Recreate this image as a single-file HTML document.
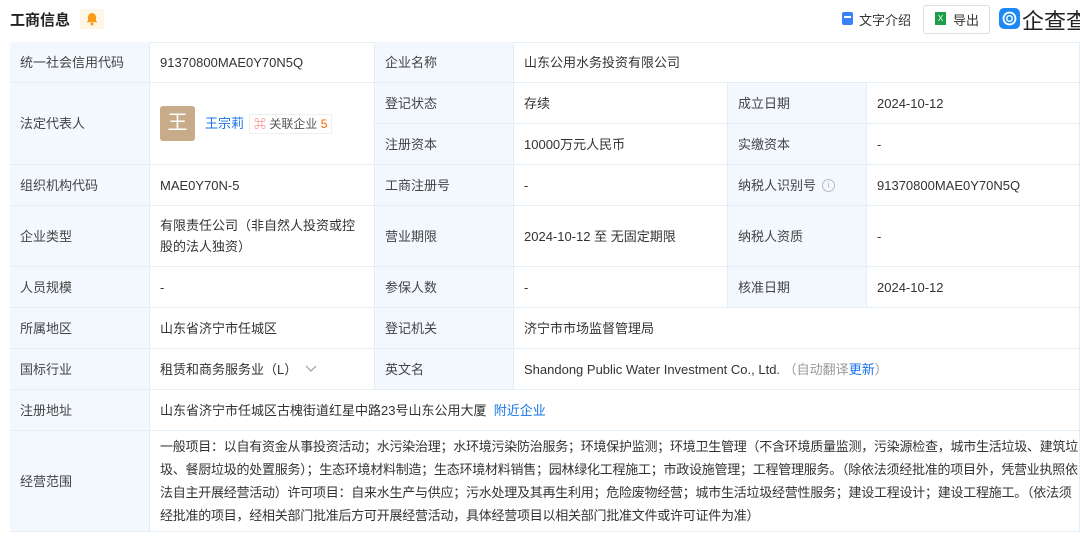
<!DOCTYPE html>
<html><head><meta charset="utf-8"><style>
*{margin:0;padding:0;box-sizing:border-box}
body{width:1080px;height:536px;overflow:hidden;background:#fff;font-family:"Liberation Sans","Noto Sans CJK SC",sans-serif;font-size:13px;color:#333;position:relative}
.c{position:absolute;border-right:1px solid #e4eef6;border-bottom:1px solid #e4eef6;display:flex;align-items:center;padding-left:10px;line-height:21px}
.l{background:#f2f8fd;color:#444}
.b{color:#1a73e8}
</style></head><body>
<div style="position:absolute;left:10px;top:9px;font-size:15px;font-weight:bold;color:#222">工商信息</div>
<div style="position:absolute;left:80px;top:9px;width:24px;height:20px;background:#fff7e6;border-radius:2px"><svg width="24" height="20" viewBox="0 0 24 20"><path d="M12 4c-2.5 0-4 2-4 4.5v3l-1.2 1.8h10.4L16 11.5v-3C16 6 14.5 4 12 4z" fill="#fa9c16"/><circle cx="12" cy="15" r="1.5" fill="#fa9c16"/></svg></div>
<div style="position:absolute;left:842px;top:12px;width:11px;height:13px;background:#3b82f6;border-radius:2px"><div style="margin:4px 2px;height:1.5px;background:#fff"></div></div>
<div style="position:absolute;left:859px;top:10px;font-size:13px;color:#333">文字介绍</div>
<div style="position:absolute;left:923px;top:5px;width:67px;height:29px;border:1px solid #ddd;border-radius:3px"></div>
<div style="position:absolute;left:935px;top:12px;width:11px;height:13px;background:#1f9e4a;color:#fff;font-size:8px;text-align:center;line-height:13px">X</div>
<div style="position:absolute;left:953px;top:10px;font-size:13px">导出</div>
<div style="position:absolute;left:999px;top:8px;width:21px;height:21px;background:#1e88f5;border-radius:5px"><svg width="21" height="21"><circle cx="10.5" cy="10.5" r="6" fill="none" stroke="#fff" stroke-width="1.8"/><circle cx="10.5" cy="10.5" r="2.8" fill="none" stroke="#fff" stroke-width="1.4"/></svg></div>
<div style="position:absolute;left:1022px;top:4px;font-size:22px;color:#222;white-space:nowrap">企查查</div>
<div style="position:absolute;left:10px;top:42px;width:1070px;height:490px;border-left:1px solid #e4eef6;border-top:1px solid #e4eef6"></div>

<div class="c l" style="left:10px;top:42px;width:140px;height:41px">统一社会信用代码</div>
<div class="c" style="left:150px;top:42px;width:225px;height:41px">91370800MAE0Y70N5Q</div>
<div class="c l" style="left:375px;top:42px;width:139px;height:41px">企业名称</div>
<div class="c" style="left:514px;top:42px;width:566px;height:41px">山东公用水务投资有限公司</div>

<div class="c l" style="left:10px;top:83px;width:140px;height:82px">法定代表人</div>
<div class="c" style="left:150px;top:83px;width:225px;height:82px">
<div style="width:35px;height:35px;background:#c8ac8a;border-radius:3px;color:#fff;font-size:20px;display:flex;align-items:center;justify-content:center">王</div>
<span class="b" style="margin-left:10px">王宗莉</span>
<span style="margin-left:5px;border:1px solid #eee;padding:0 4px;font-size:12px;color:#555;line-height:18px"><span style="color:#f66">⌘</span> 关联企业 <span style="color:#f60">5</span></span></div>
<div class="c l" style="left:375px;top:83px;width:139px;height:41px">登记状态</div>
<div class="c" style="left:514px;top:83px;width:214px;height:41px">存续</div>
<div class="c l" style="left:728px;top:83px;width:139px;height:41px">成立日期</div>
<div class="c" style="left:867px;top:83px;width:213px;height:41px">2024-10-12</div>
<div class="c l" style="left:375px;top:124px;width:139px;height:41px">注册资本</div>
<div class="c" style="left:514px;top:124px;width:214px;height:41px">10000万元人民币</div>
<div class="c l" style="left:728px;top:124px;width:139px;height:41px">实缴资本</div>
<div class="c" style="left:867px;top:124px;width:213px;height:41px">-</div>

<div class="c l" style="left:10px;top:165px;width:140px;height:41px">组织机构代码</div>
<div class="c" style="left:150px;top:165px;width:225px;height:41px">MAE0Y70N-5</div>
<div class="c l" style="left:375px;top:165px;width:139px;height:41px">工商注册号</div>
<div class="c" style="left:514px;top:165px;width:214px;height:41px">-</div>
<div class="c l" style="left:728px;top:165px;width:139px;height:41px">纳税人识别号 <span style="display:inline-block;margin-left:6px;width:13px;height:13px;border:1px solid #bbb;border-radius:50%;color:#bbb;font-size:9px;line-height:11px;text-align:center">i</span></div>
<div class="c" style="left:867px;top:165px;width:213px;height:41px">91370800MAE0Y70N5Q</div>

<div class="c l" style="left:10px;top:206px;width:140px;height:61px">企业类型</div>
<div class="c" style="left:150px;top:206px;width:225px;height:61px;padding-right:8px">有限责任公司（非自然人投资或控股的法人独资）</div>
<div class="c l" style="left:375px;top:206px;width:139px;height:61px">营业期限</div>
<div class="c" style="left:514px;top:206px;width:214px;height:61px">2024-10-12 至 无固定期限</div>
<div class="c l" style="left:728px;top:206px;width:139px;height:61px">纳税人资质</div>
<div class="c" style="left:867px;top:206px;width:213px;height:61px">-</div>

<div class="c l" style="left:10px;top:267px;width:140px;height:41px">人员规模</div>
<div class="c" style="left:150px;top:267px;width:225px;height:41px">-</div>
<div class="c l" style="left:375px;top:267px;width:139px;height:41px">参保人数</div>
<div class="c" style="left:514px;top:267px;width:214px;height:41px">-</div>
<div class="c l" style="left:728px;top:267px;width:139px;height:41px">核准日期</div>
<div class="c" style="left:867px;top:267px;width:213px;height:41px">2024-10-12</div>

<div class="c l" style="left:10px;top:308px;width:140px;height:41px">所属地区</div>
<div class="c" style="left:150px;top:308px;width:225px;height:41px">山东省济宁市任城区</div>
<div class="c l" style="left:375px;top:308px;width:139px;height:41px">登记机关</div>
<div class="c" style="left:514px;top:308px;width:566px;height:41px">济宁市市场监督管理局</div>

<div class="c l" style="left:10px;top:349px;width:140px;height:41px">国标行业</div>
<div class="c" style="left:150px;top:349px;width:225px;height:41px">租赁和商务服务业（L）<svg style="margin-left:8px" width="12" height="8"><path d="M1 1l5 5 5-5" fill="none" stroke="#999" stroke-width="1.2"/></svg></div>
<div class="c l" style="left:375px;top:349px;width:139px;height:41px">英文名</div>
<div class="c" style="left:514px;top:349px;width:566px;height:41px">Shandong Public Water Investment Co., Ltd.&nbsp;<span style="color:#999">（自动翻译<span class="b">更新</span>）</span></div>

<div class="c l" style="left:10px;top:390px;width:140px;height:41px">注册地址</div>
<div class="c" style="left:150px;top:390px;width:930px;height:41px">山东省济宁市任城区古槐街道红星中路23号山东公用大厦&nbsp;&nbsp;<span class="b">附近企业</span></div>

<div class="c l" style="left:10px;top:431px;width:140px;height:101px">经营范围</div>
<div class="c" style="left:150px;top:431px;width:930px;height:101px;padding-right:0;line-height:23px;letter-spacing:-0.25px;word-break:break-all;line-break:anywhere">一般项目：以自有资金从事投资活动；水污染治理；水环境污染防治服务；环境保护监测；环境卫生管理（不含环境质量监测，污染源检查，城市生活垃圾、建筑垃圾、餐厨垃圾的处置服务）；生态环境材料制造；生态环境材料销售；园林绿化工程施工；市政设施管理；工程管理服务。（除依法须经批准的项目外，凭营业执照依法自主开展经营活动）许可项目：自来水生产与供应；污水处理及其再生利用；危险废物经营；城市生活垃圾经营性服务；建设工程设计；建设工程施工。（依法须经批准的项目，经相关部门批准后方可开展经营活动，具体经营项目以相关部门批准文件或许可证件为准）</div>
</body></html>
